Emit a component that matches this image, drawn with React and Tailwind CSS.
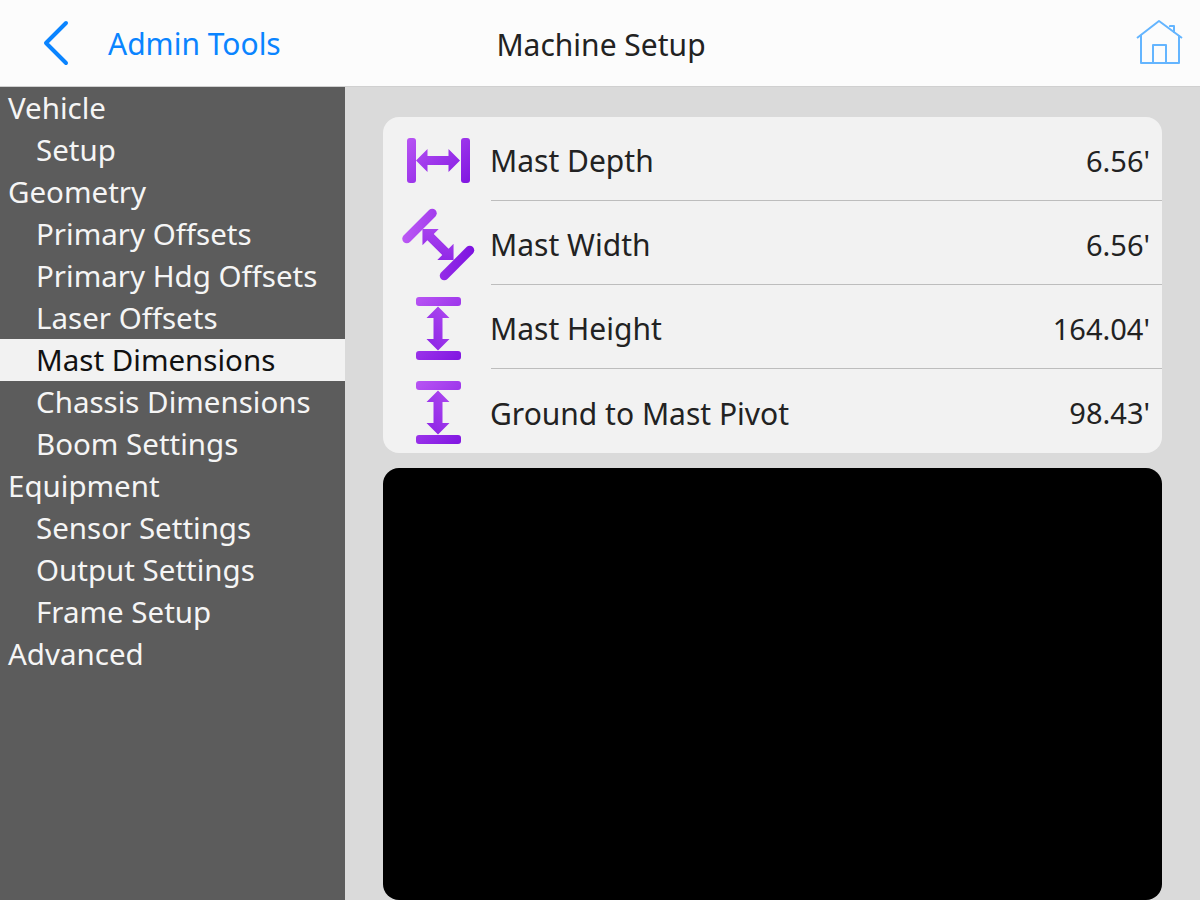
import { useId } from "react";

const menu = [
  { label: "Vehicle" },
  { label: "Setup", sub: true },
  { label: "Geometry" },
  { label: "Primary Offsets", sub: true },
  { label: "Primary Hdg Offsets", sub: true },
  { label: "Laser Offsets", sub: true },
  { label: "Mast Dimensions", sub: true, active: true },
  { label: "Chassis Dimensions", sub: true },
  { label: "Boom Settings", sub: true },
  { label: "Equipment" },
  { label: "Sensor Settings", sub: true },
  { label: "Output Settings", sub: true },
  { label: "Frame Setup", sub: true },
  { label: "Advanced" },
];

const rows = [
  { icon: "depth", label: "Mast Depth", value: "6.56'" },
  { icon: "width", label: "Mast Width", value: "6.56'" },
  { icon: "height", label: "Mast Height", value: "164.04'" },
  { icon: "height", label: "Ground to Mast Pivot", value: "98.43'" },
];

// double headed arrow, horizontal, centred on 48,43.5
const arrow = "M26 43.5 L37.5 32 V39 H58.5 V32 L70 43.5 L58.5 55 V48 H37.5 V55 Z";

function Icon({ type }) {
  const id = useId();
  const fill = `url(#${id})`;
  return (
    <svg width="90" height="84" viewBox="0 0 90 84" className="shrink-0">
      <defs>
        <linearGradient id={id} gradientUnits="userSpaceOnUse" x1="14" y1="8" x2="76" y2="76">
          <stop offset="0" stopColor="#c05ef6" />
          <stop offset="1" stopColor="#7d12e0" />
        </linearGradient>
      </defs>
      {type === "depth" && (
        <g fill={fill}>
          <rect x="17" y="21" width="9" height="45" rx="3" />
          <rect x="71" y="21" width="9" height="45" rx="3" />
          <path d={arrow} />
        </g>
      )}
      {type === "width" && (
        <g fill={fill}>
          <rect x="7" y="20.5" width="45" height="9" rx="4.5" transform="rotate(-45 29.5 25)" />
          <rect x="44.5" y="57.5" width="45" height="9" rx="4.5" transform="rotate(-45 67 62)" />
          <path d={arrow} transform="rotate(45 48 43.5)" />
        </g>
      )}
      {type === "height" && (
        <g fill={fill}>
          <rect x="26" y="12" width="45" height="9" rx="3" />
          <rect x="26" y="66" width="45" height="9" rx="3" />
          <path d={arrow} transform="rotate(90 48 43.5)" />
        </g>
      )}
    </svg>
  );
}

export default function App() {
  return (
    <div
      className="w-[1200px] h-[900px] overflow-hidden flex flex-col bg-[#dadada] text-[#222222]"
      style={{ fontFamily: '"Noto Sans", "Open Sans", sans-serif' }}
    >
      <header className="h-[87px] shrink-0 bg-[#fcfcfc] border-b border-[#d0d0d0] flex items-center relative">
        <svg width="30" height="48" viewBox="0 0 30 48" className="ml-[41px] shrink-0">
          <path d="M25 4 L5 24 L25 44" fill="none" stroke="#0a84ff" strokeWidth="4" strokeLinecap="round" strokeLinejoin="round" />
        </svg>
        <span className="ml-[37px] text-[30px] text-[#0a84ff]">Admin Tools</span>
        <span className="absolute left-0 right-0 pl-[2px] pt-[3px] text-center text-[30px]">Machine Setup</span>
        <svg width="48" height="48" viewBox="0 0 48 48" className="ml-auto mr-[17px] shrink-0" fill="none" stroke="#64b5ff" strokeWidth="2" strokeLinejoin="round">
          <path d="M2 19 L24 2 L47 19" />
          <path d="M6 16 V44 H44 V16" />
          <path d="M18 44 V26 H31 V44" />
          <path d="M35 8 V7 H39 V14" />
        </svg>
      </header>
      <div className="flex flex-1 min-h-0">
        <nav className="w-[345px] shrink-0 bg-[#5c5c5c] text-[#f5f5f5]">
          {menu.map((item) => (
            <div
              key={item.label}
              className={`h-[42px] flex items-center text-[29.5px] ${item.sub ? "pl-[36px]" : "pl-[8px]"} ${item.active ? "bg-[#f2f2f2] text-[#111111]" : ""}`}
            >
              {item.label}
            </div>
          ))}
        </nav>
        <main className="flex-1 min-w-0 pt-[30px] pl-[38px] pr-[38px] flex flex-col gap-[15px]">
          <section className="h-[336px] shrink-0 bg-[#f2f2f2] rounded-[16px] overflow-hidden">
            {rows.map((row, i) => (
              <div key={row.label} className="h-[84px] flex items-center">
                <div className="w-[101px] shrink-0 ml-[7px]">
                  <Icon type={row.icon} />
                </div>
                <div className={`flex-1 h-full flex items-center justify-between pt-[4px] pr-[12px] ${i < 3 ? "border-b border-[#bdbdbd]" : ""}`}>
                  <span className="text-[30px] -ml-px">{row.label}</span>
                  <span className="text-[29px]">{row.value}</span>
                </div>
              </div>
            ))}
          </section>
          <section className="flex-1 bg-black rounded-[16px]" />
        </main>
      </div>
    </div>
  );
}
